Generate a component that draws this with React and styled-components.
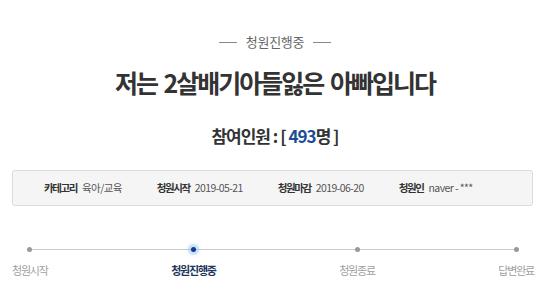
import React from "react";
import styled, { createGlobalStyle } from "styled-components";

const Global = createGlobalStyle`
  html, body { margin: 0; padding: 0; background: #fff; }
  body { font-family: "Noto Sans CJK KR", "Noto Sans", sans-serif; }
`;

const Page = styled.div`
  width: 550px;
  height: 305px;
  overflow: hidden;
  display: flex;
  flex-direction: column;
  align-items: center;
  padding-top: 34px;
  box-sizing: border-box;
`;

const Status = styled.div`
  display: flex;
  align-items: center;
  gap: 9px;
  font-size: 13px;
  line-height: 16px;
  color: #666;
  letter-spacing: -0.3px;
  &::before, &::after {
    content: "";
    width: 18px;
    height: 1px;
    background: #888;
  }
`;

const Title = styled.h1`
  margin: 17px 0 0;
  font-size: 25px;
  line-height: 30px;
  font-weight: 700;
  color: #333;
  letter-spacing: -2px;
  word-spacing: 3px;
`;

const Count = styled.div`
  margin-top: 29px;
  font-size: 17px;
  line-height: 20px;
  font-weight: 700;
  color: #333;
  letter-spacing: -1px;
`;

const Num = styled.span`
  color: #1b4d95;
`;

const Content = styled.div`
  align-self: flex-start;
  margin-left: 12px;
  width: 522px;
  display: flex;
  flex-direction: column;
`;

const InfoBox = styled.div`
  margin-top: 24px;
  width: 521px;
  height: 36px;
  box-sizing: border-box;
  background: #f5f5f5;
  border: 1px solid #dcdcdc;
  border-radius: 3px;
  display: flex;
  align-items: center;
  padding-left: 31px;
  gap: 35px;
`;

const Field = styled.div`
  display: flex;
  align-items: center;
  gap: 5px;
  font-size: 10.5px;
  line-height: 14px;
`;

const Label = styled.span`
  font-weight: 700;
  color: #333;
  letter-spacing: -1.4px;
`;

const Value = styled.span`
  color: #555;
  letter-spacing: -0.6px;
`;

const Track = styled.div`
  position: relative;
  margin-top: 41px;
  display: flex;
  justify-content: space-between;
  &::before {
    content: "";
    position: absolute;
    left: 17px;
    right: 17px;
    top: 2px;
    height: 1px;
    background: #ccc;
  }
`;

const Step = styled.div`
  position: relative;
  display: flex;
  flex-direction: column;
  align-items: center;
  gap: 10px;
`;

const Dot = styled.span`
  width: 5px;
  height: 5px;
  border-radius: 50%;
  background: ${(p) => (p.$active ? "#0b3f8f" : "#999")};
  box-shadow: ${(p) => (p.$active ? "0 0 0 3px rgba(120,170,235,0.25), 0 0 4px 4px rgba(150,190,240,0.2)" : "none")};
`;

const StepLabel = styled.span`
  font-size: 11px;
  line-height: 16px;
  letter-spacing: -1.2px;
  color: ${(p) => (p.$active ? "#1e3560" : "#a0a0a0")};
  font-weight: ${(p) => (p.$active ? 700 : 400)};
`;

const fields = [
  ["카테고리", "육아/교육"],
  ["청원시작", "2019-05-21"],
  ["청원마감", "2019-06-20"],
  ["청원인", "naver - ***"],
];

const steps = ["청원시작", "청원진행중", "청원종료", "답변완료"];

export default function App() {
  return (
    <>
      <Global />
      <Page>
        <Status>청원진행중</Status>
        <Title>저는 2살배기아들잃은 아빠입니다</Title>
        <Count>
          참여인원 : [ <Num>493</Num>명 ]
        </Count>
        <Content>
          <InfoBox>
            {fields.map(([l, v]) => (
              <Field key={l}>
                <Label>{l}</Label>
                <Value>{v}</Value>
              </Field>
            ))}
          </InfoBox>
          <Track>
            {steps.map((s, i) => (
              <Step key={s}>
                <Dot $active={i === 1} />
                <StepLabel $active={i === 1}>{s}</StepLabel>
              </Step>
            ))}
          </Track>
        </Content>
      </Page>
    </>
  );
}
